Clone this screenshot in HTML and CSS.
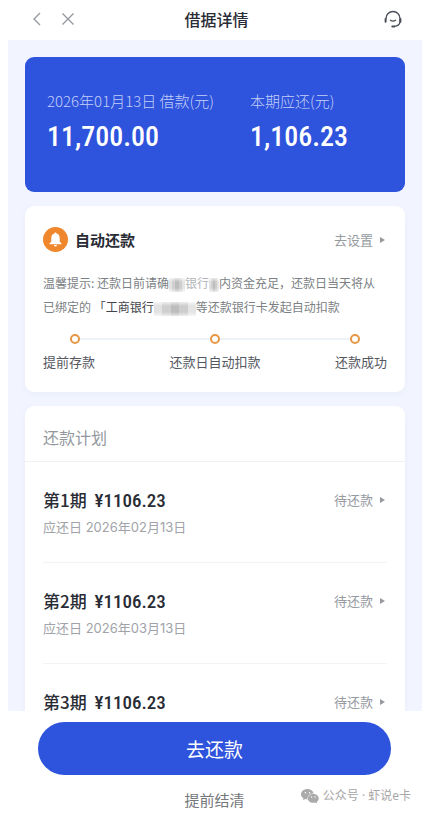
FILE: index.html
```html
<!DOCTYPE html>
<html lang="zh-CN">
<head>
<meta charset="utf-8">
<meta name="viewport" content="width=device-width, initial-scale=1">
<title>借据详情</title>
<link rel="stylesheet" href="styles.css">
</head>
<body>
<div class="app">
  <header class="topbar">
    <div class="topbar-side">
      <button class="icon-button" aria-label="返回"><svg width="14" height="14" viewBox="0 0 14 14"><path d="M10 1 4 7l6 6"/></svg></button>
      <button class="icon-button" aria-label="关闭"><svg width="14" height="14" viewBox="0 0 14 14"><path d="m1.500 1.500 11 11m0-11-11 11"/></svg></button>
    </div>
    <h1 class="title">借据详情</h1>
    <div class="topbar-side topbar-end">
      <button class="icon-button service" aria-label="客服"><svg width="20" height="20" viewBox="0 0 20 20"><path d="M3 9.500a7 7 0 0 1 14 0v3.500c-.4 2.500-2.500 4-5.500 4.400M7.500 11.200q2.500 1.800 5 0"/><path class="thick" d="M2.600 10v2.800M17.400 10v2.800M9.300 17.400h2"/></svg></button>
    </div>
  </header>

  <main class="content">
    <section class="summary">
      <div>
        <p class="summary-label">2026年01月13日 借款(元)</p>
        <p class="summary-value">11,700.00</p>
      </div>
      <div>
        <p class="summary-label">本期应还(元)</p>
        <p class="summary-value">1,106.23</p>
      </div>
    </section>

    <section class="card autopay">
      <div class="row">
        <h2 class="autopay-title"><svg width="25" height="25" viewBox="0 0 25 25"><circle cx="12.500" cy="12.500" r="12.500" fill="#ef872d"/><path fill="#fff" d="M12.500 5.500c.7 0 1 .5 1 1.100 2.100.5 3.200 2.100 3.200 4.200v3.700l1.800 2v.8h-12v-.8l1.800-2v-3.700c0-2.100 1.100-3.700 3.200-4.200 0-.6.300-1.100 1-1.100zM10.900 18h3.200q-.4 1.500-1.600 1.500T10.900 18z"/></svg>自动还款</h2>
        <a class="more" href="#settings">去设置</a>
      </div>
      <p class="notice">温馨提示: 还款日前请确<span class="mosaic mosaic-medium"></span><span class="faded">银行</span><span class="mosaic mosaic-small"></span>内资金充足，还款日当天将从<br>已绑定的 <span class="bank">「工商银行</span><span class="mosaic mosaic-large"></span>等还款银行卡发起自动扣款</p>
      <ol class="steps">
        <li>提前存款</li>
        <li>还款日自动扣款</li>
        <li>还款成功</li>
      </ol>
    </section>

    <section class="card plan">
      <h2 class="plan-title">还款计划</h2>
      <ul class="plan-list">
        <li class="plan-item">
          <div class="row"><h3>第1期 <span class="amount">¥1106.23</span></h3><a class="more" href="#p1">待还款</a></div>
          <p>应还日 2026年02月13日</p>
        </li>
        <li class="plan-item">
          <div class="row"><h3>第2期 <span class="amount">¥1106.23</span></h3><a class="more" href="#p2">待还款</a></div>
          <p>应还日 2026年03月13日</p>
        </li>
        <li class="plan-item">
          <div class="row"><h3>第3期 <span class="amount">¥1106.23</span></h3><a class="more" href="#p3">待还款</a></div>
        </li>
      </ul>
    </section>
  </main>

  <footer class="actions">
    <button class="pay">去还款</button>
    <button class="settle">提前结清</button>
    <p class="credit"><svg width="18" height="16" viewBox="0 0 18 16"><path fill="#aaa" d="M6.500 1C2.900 1 0 3.300 0 6.200c0 1.700 1 3.100 2.400 4.100L2 12.300l2.300-1.200q1 .3 2.200.3C6 8 8.600 5.400 12.700 5.400 12 2.800 9.500 1 6.500 1z"/><path fill="#aaa" d="M12.300 6.100c-3.100 0-5.400 1.900-5.400 4.300s2.300 4.400 5.400 4.400q1 0 1.900-.3l1.900 1-.4-1.600c1.200-.8 2-2 2-3.500 0-2.400-2.300-4.300-5.400-4.300z"/><g fill="#fff"><circle cx="4.400" cy="4.800" r=".8"/><circle cx="8.600" cy="4.800" r=".8"/><circle cx="10.600" cy="9" r=".7"/><circle cx="14.100" cy="9" r=".7"/></g></svg>公众号 · 虾说e卡</p>
  </footer>
</div>
</body>
</html>
```
FILE: styles.css
```css
*, *::before, *::after { box-sizing: border-box; }
body, h1, h2, h3, p, ul, ol { margin: 0; padding: 0; }
ul, ol { list-style: none; }
body {
  background: #fff;
  color: #292c35;
  font-family: "Noto Sans CJK SC", sans-serif;
  font-size: 13px;
}
button { border: 0; padding: 0; background: none; font: inherit; cursor: pointer; }
a { color: inherit; text-decoration: none; }
svg { display: block; flex: none; }

.app { display: flex; flex-direction: column; height: 100vh; }

.topbar {
  display: flex;
  align-items: center;
  flex: none;
  height: 40px;
  padding: 0 22px 2px 30px;
}
.topbar-side { display: flex; flex: 1; gap: 17px; }
.topbar-end { justify-content: flex-end; }
.title { font-size: 16px; font-weight: 500; line-height: 24px; }
.icon-button svg { fill: none; stroke: #969aa1; stroke-width: 1.4; }
.service svg { stroke: #4a4f58; stroke-linecap: round; }
.service .thick { stroke-width: 2; }

.content {
  flex: 1;
  min-height: 0;
  margin: 0 3px 0 8px;
  padding: 17px 17px 0;
  overflow: hidden;
  background: #f2f5ff;
}

.summary {
  display: grid;
  grid-template-columns: 203px 1fr;
  height: 135px;
  padding: 34px 22px;
  border-radius: 9px;
  background: #2e53dc;
}
.summary-label {
  color: #c3cff8;
  font-size: 15px;
  font-weight: 300;
  line-height: 20px;
  white-space: nowrap;
}
.summary-value {
  color: #fff;
  font-family: "Roboto Condensed", Roboto, sans-serif;
  font-size: 28px;
  font-weight: 500;
  line-height: 52px;
}

.card {
  margin-top: 14px;
  border-radius: 9px;
  background: #fff;
  box-shadow: 0 2px 6px #e9edf8;
}
.row { display: flex; align-items: center; justify-content: space-between; }
.more {
  display: flex;
  align-items: center;
  gap: 7px;
  padding-right: 2px;
  color: #969a9f;
  font-size: 13px;
  line-height: 20px;
}
.more::after {
  content: "";
  border-left: 5px solid #969a9f;
  border-top: 3px solid transparent;
  border-bottom: 3px solid transparent;
}

.autopay { padding: 21px 18px 20px; }
.autopay-title {
  display: flex;
  align-items: center;
  gap: 7px;
  font-size: 15px;
  font-weight: 700;
  line-height: 25px;
}
.notice {
  margin-top: 19px;
  color: #7c7f84;
  font-size: 12px;
  line-height: 24px;
  white-space: nowrap;
}
.bank { color: #41444b; }
.faded { color: #b4b6b9; }
.mosaic {
  display: inline-block;
  height: 14px;
  vertical-align: middle;
  background:
    linear-gradient(#fffa, #fff0 4px 10px, #fffa),
    linear-gradient(90deg, #e2e2e2 20%, #cfcfcf 20% 40%, #bdbdbd 40% 60%, #cdcdcd 60% 80%, #e4e4e4 80%);
}
.mosaic-small { width: 10px; }
.mosaic-medium { width: 16px; }
.mosaic-large { width: 42px; }

.steps {
  display: grid;
  grid-template-columns: 1fr auto 1fr;
  margin-top: 15px;
  padding-top: 18px;
  background: linear-gradient(#edf2f8, #edf2f8) 50% 4px / calc(100% - 64px) 2px no-repeat;
  color: #55585f;
  font-size: 13px;
  line-height: 20px;
}
.steps li { position: relative; justify-self: start; }
.steps li:last-child { justify-self: end; }
.steps li::before {
  content: "";
  position: absolute;
  top: -18px;
  left: calc(50% - 5px);
  width: 10px;
  height: 10px;
  border: 2px solid #e79743;
  border-radius: 50%;
  background: #fff;
}
.steps li:first-child::before { left: 27px; }
.steps li:last-child::before { left: auto; right: 27px; }

.plan-title {
  padding: 19px 18px 12px;
  border-bottom: 1px solid #f0f1f4;
  color: #93979d;
  font-size: 16px;
  font-weight: 400;
  line-height: 24px;
}
.plan-list { padding: 0 18px; }
.plan-item { height: 101px; padding-top: 28px; border-bottom: 1px solid #f2f3f5; }
.plan-item h3 { font-size: 17px; font-weight: 500; line-height: 18px; }
.amount { margin-left: 4px; font-family: "Roboto Condensed", Roboto, sans-serif; font-size: 19px; }
.plan-item p {
  margin-top: 7px;
  color: #a0a3a9;
  font-family: Inter, "Noto Sans CJK SC", sans-serif;
  font-size: 13px;
  line-height: 20px;
}

.actions {
  position: relative;
  display: flex;
  flex-direction: column;
  flex: none;
  align-items: stretch;
  padding: 11px 34px 0 38px;
}
.pay {
  height: 53px;
  border-radius: 27px;
  background: #2e53dc;
  color: #fff;
  font-size: 19px;
}
.settle { height: 38px; padding-top: 12px; color: #75777b; font-size: 15px; line-height: 26px; }
.credit {
  position: absolute;
  right: 14px;
  bottom: 7px;
  display: flex;
  align-items: center;
  gap: 4px;
  color: #a7a7a7;
  font-family: "Noto Sans", "Noto Sans CJK SC", sans-serif;
  font-size: 12px;
  line-height: 20px;
}
```
